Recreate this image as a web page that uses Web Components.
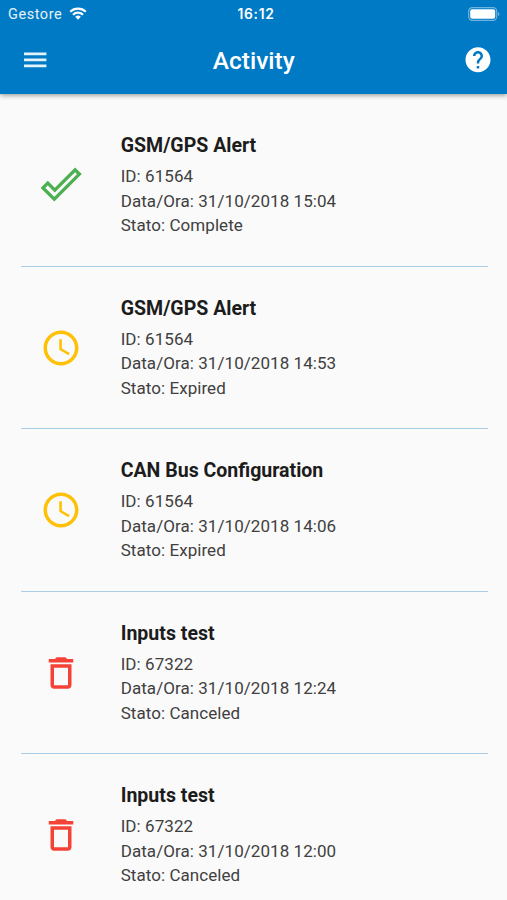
<!DOCTYPE html>
<html lang="it"><head><meta charset="utf-8"><title>Activity</title>
<style>
body{margin:0;background:#fafafa;font-family:Roboto,"Liberation Sans",sans-serif;height:900px;overflow:hidden}
</style></head><body>
<activity-app></activity-app>
<script>
const define = (name, html) => customElements.define(name, class extends HTMLElement {
  constructor(){ super(); this.attachShadow({mode:'open'}).innerHTML = html; }
});

define('status-bar', `<style>
:host{display:grid;grid-template-columns:1fr auto 1fr;align-items:center;height:27px;padding:0 7px 0 8px;color:#fff;font-size:14px;line-height:27px;font-family:Inter,Roboto,sans-serif}
.left{display:flex;align-items:center;gap:7px;color:#e4f2fa}
.carrier{font:14.5px/27px Roboto,sans-serif;letter-spacing:.55px;padding-top:1px}
.time{font-weight:600;font-size:13.8px;letter-spacing:.75px;padding:1px 0 0 4px}
.right{display:flex;justify-content:flex-end}
svg{display:block}
.left svg{margin-top:-2px}
.right svg{margin-top:-1px}
</style>
<div class="left"><span class="carrier"><slot name="carrier"></slot></span>
<svg width="18" height="13" viewBox="0 0 18 13" fill="none" stroke="#fff" stroke-width="2.2"><path d="M1.2 4.7a11.2 11.2 0 0 1 15.6 0M4 7.7a7.2 7.2 0 0 1 10 0"/><path d="M9 12.7 6.2 9.8a4 4 0 0 1 5.6 0Z" fill="#fff" stroke="none"/></svg></div>
<span class="time"><slot name="time"></slot></span>
<div class="right"><svg width="32" height="14" viewBox="0 0 32 14"><rect x=".7" y=".7" width="28" height="12.6" rx="3.6" fill="none" stroke="#6db5df" stroke-width="1.2"/><rect x="2.2" y="2.2" width="25" height="9.6" rx="2" fill="#fff"/><path d="M30 5v4q1.5-.6 1.5-2T30 5Z" fill="#6db5df"/></svg></div>`);

define('app-bar', `<style>
:host{display:grid;grid-template-columns:26px 1fr 26px;align-items:center;height:65px;padding:0 16.5px 0 22px;color:#fff;box-sizing:border-box}
h1{margin:0;padding:2px 5px 0 0;text-align:center;font-size:24.5px;font-weight:500;line-height:30px}
svg{display:block}
</style>
<svg width="26" height="18" viewBox="0 0 26 18"><path fill="#e4f2fa" d="M2 1.6h22.4v2.7H2zM2 7.6h22.4v2.7H2zM2 13.6h22.4v2.7H2z"/></svg>
<h1><slot></slot></h1>
<svg width="26" height="26" viewBox="1.6 1.8 20.800 20.800"><path fill="#fff" d="M12 2C6.48 2 2 6.48 2 12s4.480 10 10 10 10-4.480 10-10S17.520 2 12 2zm1 17h-2v-2h2v2zm2.070-7.750l-.9.920C13.450 12.900 13 13.500 13 15h-2v-.5c0-1.100.450-2.100 1.170-2.830l1.240-1.260c.370-.360.590-.860.590-1.410 0-1.100-.9-2-2-2s-2 .9-2 2H8c0-2.210 1.790-4 4-4s4 1.790 4 4c0 .880-.360 1.680-.930 2.250z"/></svg>`);

const icons = {
  complete: '<path fill="none" stroke="#4caf50" stroke-width="3.3" d="M3 23.900 7.800 19.100 14.800 26.100 35.100 5.800 39.400 10.100 14.300 35.200Z"/>',
  expired: '<g transform="scale(1.750)"><path fill="#ffc107" d="M11.990 2C6.470 2 2 6.480 2 12s4.470 10 9.990 10C17.520 22 22 17.520 22 12S17.520 2 11.990 2zM12 20c-4.420 0-8-3.580-8-8s3.580-8 8-8 8 3.580 8 8-3.580 8-8 8zM12.500 7H11v6l5.250 3.150.750-1.230-4.500-2.670z"/></g>',
  canceled: '<g transform="scale(1.750)"><path fill="#f44336" d="M6 19c0 1.100.9 2 2 2h8c1.100 0 2-.9 2-2V7H6v12zM8 9h8v10H8V9zm7.500-5-1-1h-5l-1 1H5v2h14V4z"/></g>'
};
customElements.define('status-icon', class extends HTMLElement {
  constructor(){ super(); this.attachShadow({mode:'open'}); }
  connectedCallback(){
    this.shadowRoot.innerHTML = `<style>:host{display:block}svg{display:block;overflow:visible}</style><svg width="42" height="42" viewBox="0 0 42 42">${icons[this.getAttribute('kind')]}</svg>`;
  }
});

customElements.define('activity-item', class extends HTMLElement {
  constructor(){ super(); this.attachShadow({mode:'open'}); }
  connectedCallback(){
    const a = n => this.getAttribute(n);
    this.shadowRoot.innerHTML = `<style>
:host{display:grid;grid-template-columns:80px 1fr;column-gap:20px;align-items:center;height:162.500px;margin:0 19.500px 0 20.700px;box-sizing:border-box;border-bottom:1.500px solid #a9cde6}
status-icon{justify-self:center;margin-top:1px}
h2{margin:0 0 6px;font-size:19.550px;font-weight:700;line-height:24px;color:#1c1c1c}
p{margin:0;font-size:17px;line-height:24.500px;letter-spacing:.06px;color:#404040}
div{padding-top:2px}
</style><status-icon kind="${a('kind')}"></status-icon><div><h2><slot></slot></h2><p>ID: ${a('code')}</p><p>Data/Ora: 31/10/2018 ${a('time')}</p><p>Stato: ${a('state')}</p></div>`;
  }
});

define('activity-app', `<style>
:host{display:block}
header{background:#007ac4;height:94px;box-shadow:0 1px 5px rgba(0,0,0,.45)}
main{padding-top:10px}
</style>
<header><status-bar><span slot="carrier">Gestore</span><span slot="time">16:12</span></status-bar><app-bar>Activity</app-bar></header>
<main>
<activity-item kind="complete" code="61564" time="15:04" state="Complete">GSM/GPS Alert</activity-item>
<activity-item kind="expired" code="61564" time="14:53" state="Expired">GSM/GPS Alert</activity-item>
<activity-item kind="expired" code="61564" time="14:06" state="Expired">CAN Bus Configuration</activity-item>
<activity-item kind="canceled" code="67322" time="12:24" state="Canceled">Inputs test</activity-item>
<activity-item kind="canceled" code="67322" time="12:00" state="Canceled">Inputs test</activity-item>
</main>`);
</script></body></html>
